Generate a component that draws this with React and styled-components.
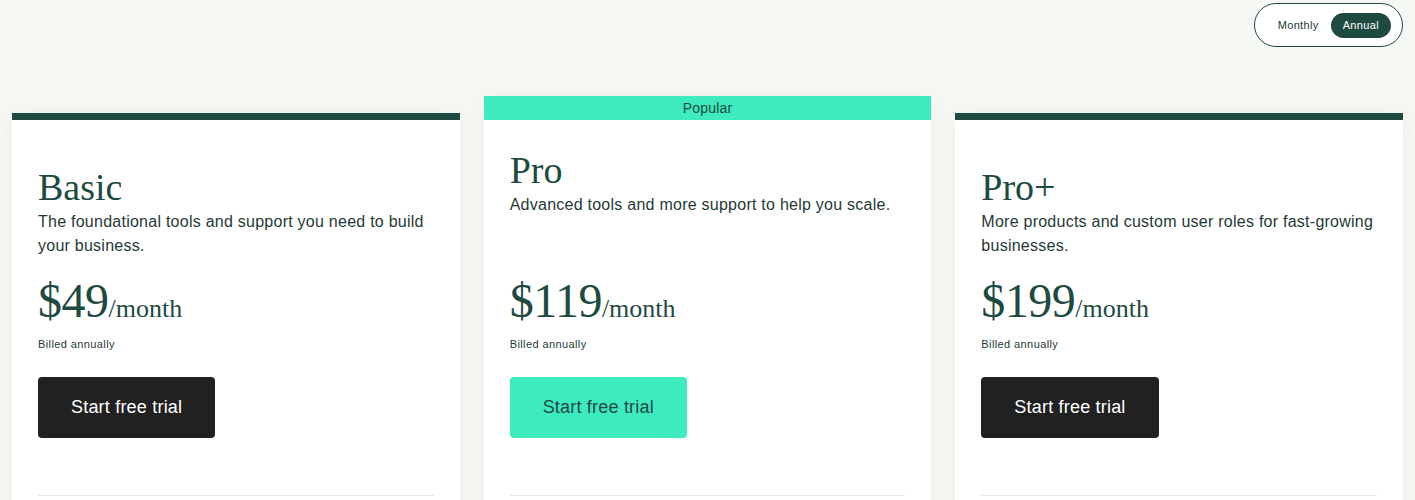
import React from 'react';
import styled, { createGlobalStyle } from 'styled-components';

const Color = {
    page: '#f6f8f3',
    green: '#1e4a42',
    text: '#1f3a34',
    mint: '#3debbe',
    black: '#212121',
    line: '#dfe9e6',
};

const GlobalStyle = createGlobalStyle`
    * {
        box-sizing: border-box;
    }
    body {
        margin: 0;
        background: ${Color.page};
        font-family: "Liberation Sans", Arial, sans-serif;
        color: ${Color.text};
        overflow: hidden;
    }
`;

const Page = styled.div`
    height: 500px;
    overflow: hidden;
`;

const TopBar = styled.div`
    display: flex;
    justify-content: flex-end;
    padding: 3px 12px 0;
`;

const Toggle = styled.div`
    display: flex;
    align-items: center;
    height: 44px;
    padding: 0 11px;
    border: 1px solid ${Color.green};
    border-radius: 22px;
    background: #fff;
`;

const ToggleOption = styled.button`
    height: 25px;
    padding: 0 12px;
    border: 0;
    border-radius: 13px;
    font-family: inherit;
    font-size: 11px;
    letter-spacing: 0.35px;
    cursor: pointer;
    background: ${(p) => (p.$active ? Color.green : 'transparent')};
    color: ${(p) => (p.$active ? '#fff' : Color.text)};
`;

const Grid = styled.div`
    display: grid;
    grid-template-columns: repeat(3, 1fr);
    gap: 24px;
    align-items: start;
    padding: 49px 12px 0;
`;

const Card = styled.div`
    margin-top: ${(p) => (p.$popular ? '0' : '17px')};
    background: #fff;
    box-shadow: 0 0 18px rgba(30, 74, 66, 0.06);
    height: 460px;
`;

const Band = styled.div`
    height: ${(p) => (p.$popular ? '24px' : '7px')};
    background: ${(p) => (p.$popular ? Color.mint : Color.green)};
    color: ${Color.green};
    font-size: 14px;
    letter-spacing: 0.2px;
    line-height: 24px;
    text-align: center;
`;

const Body = styled.div`
    padding: 0 26px;
`;

const Header = styled.div`
    height: 157px;
    padding-top: ${(p) => (p.$popular ? '31px' : '48px')};
`;

const PlanName = styled.h2`
    margin: 0 0 4px;
    font-family: "Liberation Serif", "Times New Roman", serif;
    font-weight: 400;
    font-size: 38px;
    line-height: 1;
    color: ${Color.green};
`;

const Description = styled.p`
    margin: 0;
    font-size: 16px;
    line-height: 24px;
    letter-spacing: 0.25px;
`;

const Price = styled.div`
    font-family: "Liberation Serif", "Times New Roman", serif;
    font-size: 48px;
    line-height: 1;
    color: ${Color.green};
    letter-spacing: -0.5px;
`;

const Per = styled.span`
    font-size: 26px;
    letter-spacing: 0;
`;

const Billed = styled.div`
    margin-top: 11px;
    font-size: 11px;
    line-height: 16px;
    letter-spacing: 0.4px;
`;

const TrialButton = styled.button`
    display: block;
    margin-top: 25px;
    height: 61px;
    padding: 0 33px;
    border: 0;
    border-radius: 4px;
    font-family: inherit;
    font-size: 18px;
    letter-spacing: 0.2px;
    cursor: pointer;
    background: ${(p) => (p.$popular ? Color.mint : Color.black)};
    color: ${(p) => (p.$popular ? Color.green : '#fff')};
`;

const Divider = styled.hr`
    margin: 57px 0 0;
    border: 0;
    border-top: 1px solid ${Color.line};
`;

const plans = [
    {
        name: 'Basic',
        text: 'The foundational tools and support you need to build your business.',
        price: '$49',
    },
    {
        name: 'Pro',
        text: 'Advanced tools and more support to help you scale.',
        price: '$119',
        popular: true,
    },
    {
        name: 'Pro+',
        text: 'More products and custom user roles for fast-growing businesses.',
        price: '$199',
    },
];

const App = () => {
    return (
        <>
            <GlobalStyle />
            <Page>
                <TopBar>
                    <Toggle>
                        <ToggleOption>Monthly</ToggleOption>
                        <ToggleOption $active>Annual</ToggleOption>
                    </Toggle>
                </TopBar>
                <Grid>
                    {plans.map((plan) => (
                        <Card key={plan.name} $popular={plan.popular}>
                            <Band $popular={plan.popular}>{plan.popular ? 'Popular' : null}</Band>
                            <Body>
                                <Header $popular={plan.popular}>
                                    <PlanName>{plan.name}</PlanName>
                                    <Description>{plan.text}</Description>
                                </Header>
                                <Price>
                                    {plan.price}
                                    <Per>/month</Per>
                                </Price>
                                <Billed>Billed annually</Billed>
                                <TrialButton $popular={plan.popular}>Start free trial</TrialButton>
                                <Divider />
                            </Body>
                        </Card>
                    ))}
                </Grid>
            </Page>
        </>
    );
};

export default App;
